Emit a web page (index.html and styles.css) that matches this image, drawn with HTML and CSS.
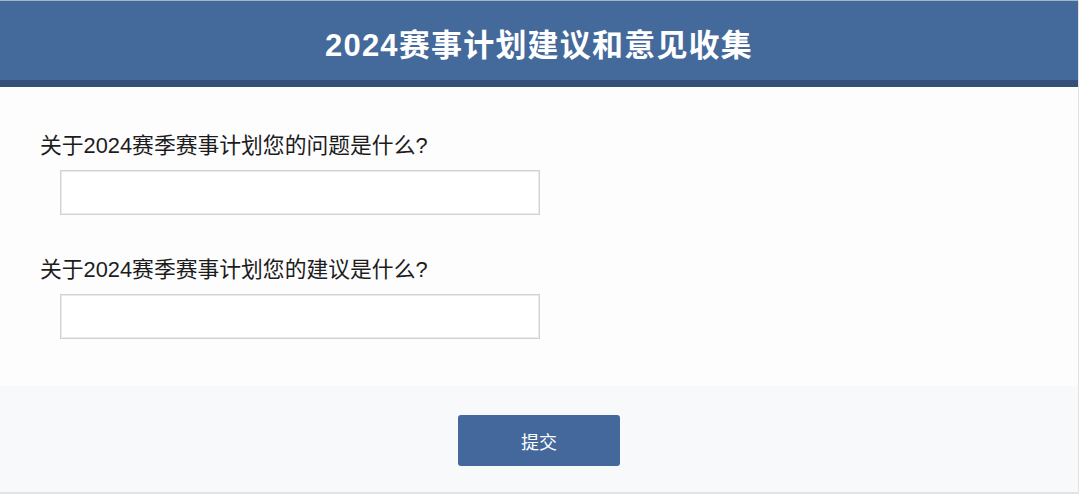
FILE: index.html
```html
<!DOCTYPE html>
<html lang="zh-CN">
<head>
<meta charset="utf-8">
<title>2024赛事计划建议和意见收集</title>
<link rel="stylesheet" href="styles.css">
</head>
<body>
<div class="page">
  <header class="header">
    <h1 class="title">2024赛事计划建议和意见收集</h1>
  </header>
  <form class="form">
    <div class="field">
      <label class="label" for="q1">关于2024赛季赛事计划您的问题是什么?</label>
      <input class="input" id="q1" type="text">
    </div>
    <div class="field">
      <label class="label" for="q2">关于2024赛季赛事计划您的建议是什么?</label>
      <input class="input" id="q2" type="text">
    </div>
  </form>
  <div class="footer">
    <button class="submit" type="button">提交</button>
  </div>
</div>
</body>
</html>
```

FILE: styles.css
```css
html, body {
  margin: 0;
  padding: 0;
  background: #ffffff;
}

body {
  font-family: "Liberation Sans", "Noto Sans CJK SC", sans-serif;
  color: #1a1a1a;
}

.page {
  width: 1079px;
  height: 494px;
  box-sizing: border-box;
  border-right: 1px solid #e3e3e3;
  border-bottom: 2px solid #e2e3e5;
  display: flex;
  flex-direction: column;
}

.header {
  height: 87px;
  box-sizing: border-box;
  background: #44699b;
  border-top: 1px solid #a7b3c6;
  border-bottom: 7px solid #34507a;
  padding-top: 11px;
  display: flex;
  align-items: center;
  justify-content: center;
}

.title {
  margin: 0;
  color: #ffffff;
  font-size: 31px;
  font-weight: bold;
  letter-spacing: 1.2px;
  line-height: 40px;
}

.form {
  height: 299px;
  box-sizing: border-box;
  background: #fdfdfe;
  padding-top: 44px;
  display: flex;
  flex-direction: column;
  gap: 40px;
}

.field {
  display: flex;
  flex-direction: column;
  align-items: flex-start;
}

.label {
  margin-left: 40px;
  font-size: 21.8px;
  line-height: 30px;
  color: #1c1c1c;
}

.input {
  margin: 9px 0 0 60px;
  width: 480px;
  height: 45px;
  box-sizing: border-box;
  border: 1px solid #d2d2d2;
  box-shadow: inset 0 0 0 1px #ebebeb;
  background: #ffffff;
  border-radius: 0;
  outline: none;
  padding: 0 10px;
  font-size: 18px;
}

.footer {
  flex: 1;
  background: #f8f9fb;
  display: flex;
  justify-content: center;
  align-items: flex-start;
  padding-top: 29px;
}

.submit {
  width: 162px;
  height: 51px;
  border: none;
  border-radius: 3px;
  background: #44689b;
  color: #ffffff;
  font-family: "Liberation Sans", "Noto Sans CJK SC", sans-serif;
  font-size: 18px;
  cursor: pointer;
}
```
